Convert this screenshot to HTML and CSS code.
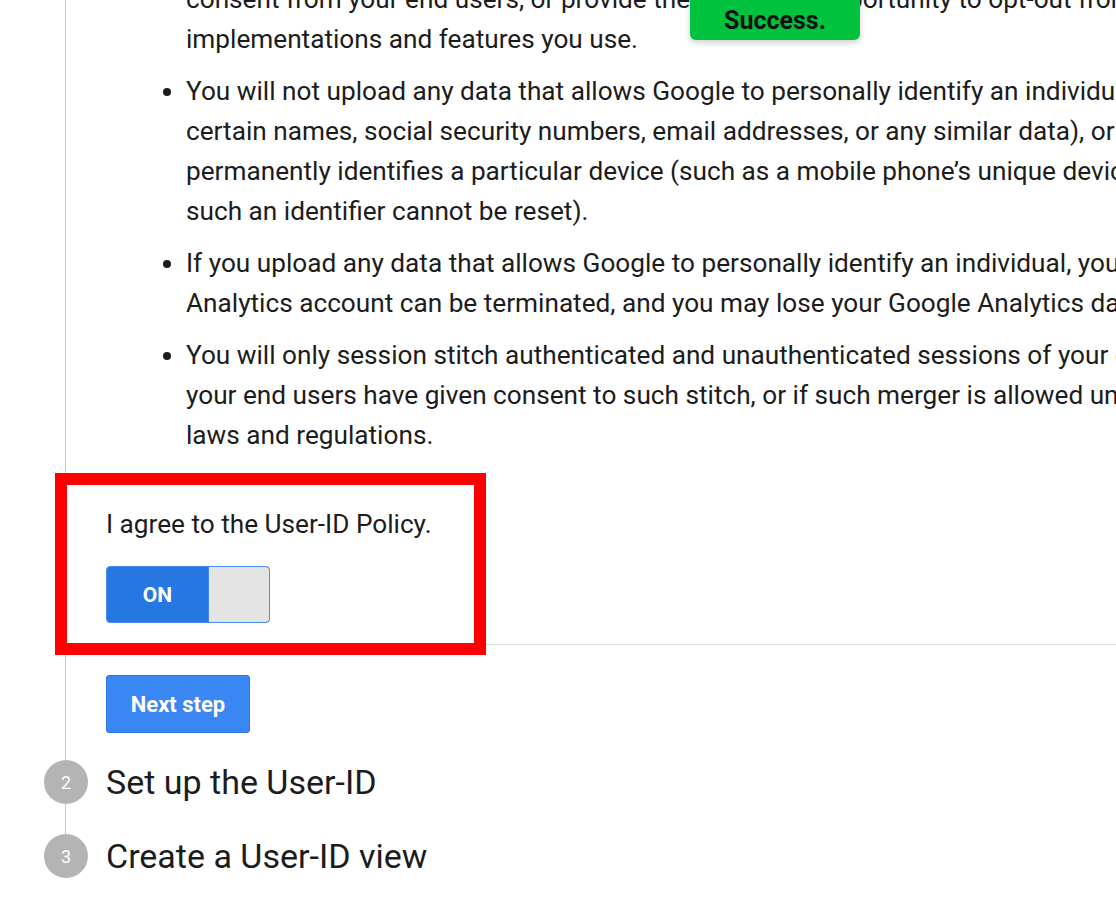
FILE: index.html
```html
<!DOCTYPE html>
<html lang="en">
<head>
<meta charset="utf-8">
<title>User-ID setup</title>
<link rel="stylesheet" href="styles.css">
</head>
<body>
<div class="page">
  <div class="step-body">
    <ul class="policy">
      <li>the implementations and features of Google Analytics you use. You will either get<br>consent from your end users, or provide them with the opportunity to opt-out from the<br>implementations and features you use.</li>
      <li>You will not upload any data that allows Google to personally identify an individual (such as<br>certain names, social security numbers, email addresses, or any similar data), or data that<br>permanently identifies a particular device (such as a mobile phone’s unique device identifier if<br>such an identifier cannot be reset).</li>
      <li>If you upload any data that allows Google to personally identify an individual, your Google<br>Analytics account can be terminated, and you may lose your Google Analytics data.</li>
      <li>You will only session stitch authenticated and unauthenticated sessions of your end users if<br>your end users have given consent to such stitch, or if such merger is allowed under applicable<br>laws and regulations.</li>
    </ul>
    <p class="agree">I agree to the User-ID Policy.</p>
    <div class="toggle">
      <span class="toggle-on">ON</span>
      <span class="toggle-thumb"></span>
    </div>
    <div class="divider"></div>
    <button class="next">Next step</button>
  </div>
  <div class="step">
    <span class="num">2</span>
    <span class="title">Set up the User-ID</span>
  </div>
  <div class="connector"></div>
  <div class="step">
    <span class="num">3</span>
    <span class="title">Create a User-ID view</span>
  </div>

  <div class="toast">Success.</div>
  <div class="highlight"></div>
</div>
</body>
</html>
```

FILE: styles.css
```css
html, body {
  margin: 0;
  padding: 0;
  background: #ffffff;
  overflow: hidden;
}

body {
  width: 1116px;
  height: 914px;
  font-family: Roboto, "Noto Sans", "Liberation Sans", sans-serif;
  color: #1c1c1c;
}

.page {
  position: relative;
  width: 1116px;
  height: 914px;
  overflow: hidden;
}

.step-body {
  margin-left: 65px;
  border-left: 1px solid #c6c6c6;
  padding-left: 40px;
  padding-bottom: 27px;
  margin-top: -61px;
}

.policy {
  margin: 0;
  padding-left: 80px;
  font-size: 26.2px;
  line-height: 40px;
  white-space: nowrap;
}

.policy li {
  margin-bottom: 12px;
}

.policy li:last-child {
  margin-bottom: 0;
}

.agree {
  margin: 49px 0 0;
  font-size: 26.2px;
  line-height: 40px;
}

.toggle {
  margin-top: 22px;
  width: 162px;
  height: 55px;
  border: 1px solid #4a8cf2;
  border-radius: 4px;
  display: flex;
  overflow: hidden;
  background: #2677e2;
}

.toggle-on {
  width: 101px;
  display: flex;
  align-items: center;
  justify-content: center;
  color: #ffffff;
  font-weight: 700;
  font-size: 21px;
}

.toggle-thumb {
  flex: 1;
  background: #e4e4e4;
  border-left: 1px solid #3f86ee;
  border-radius: 0 3px 3px 0;
}

.divider {
  margin-top: 21px;
  margin-left: -38px;
  width: 1100px;
  height: 1px;
  background: #dcdcdc;
}

.next {
  display: block;
  margin-top: 30px;
  width: 144px;
  height: 58px;
  border: 1px solid #2f7ae8;
  border-radius: 3px;
  background: #3a86f2;
  color: #ffffff;
  font-family: Roboto, "Noto Sans", "Liberation Sans", sans-serif;
  font-weight: 700;
  font-size: 22px;
  padding: 0;
}

.step {
  display: flex;
  align-items: center;
  height: 44px;
  padding-left: 44px;
  gap: 18px;
}

.num {
  width: 44px;
  height: 44px;
  border-radius: 50%;
  background: #b4b4b4;
  color: #ffffff;
  font-size: 18px;
  display: flex;
  align-items: center;
  justify-content: center;
}

.title {
  font-size: 34px;
  color: #1c1c1c;
}

.connector {
  margin-left: 65px;
  width: 1px;
  height: 30px;
  background: #c6c6c6;
}

.toast {
  position: absolute;
  left: 690px;
  top: -10px;
  width: 170px;
  height: 50px;
  padding-top: 10px;
  box-sizing: border-box;
  background: #00c23c;
  border-radius: 0 0 6px 6px;
  box-shadow: 0 3px 6px rgba(0, 0, 0, 0.18);
  color: #111111;
  font-weight: 700;
  font-size: 25px;
  display: flex;
  align-items: center;
  justify-content: center;
}

.highlight {
  position: absolute;
  left: 55px;
  top: 473px;
  width: 407px;
  height: 158px;
  border: 12px solid #ff0000;
}
```
